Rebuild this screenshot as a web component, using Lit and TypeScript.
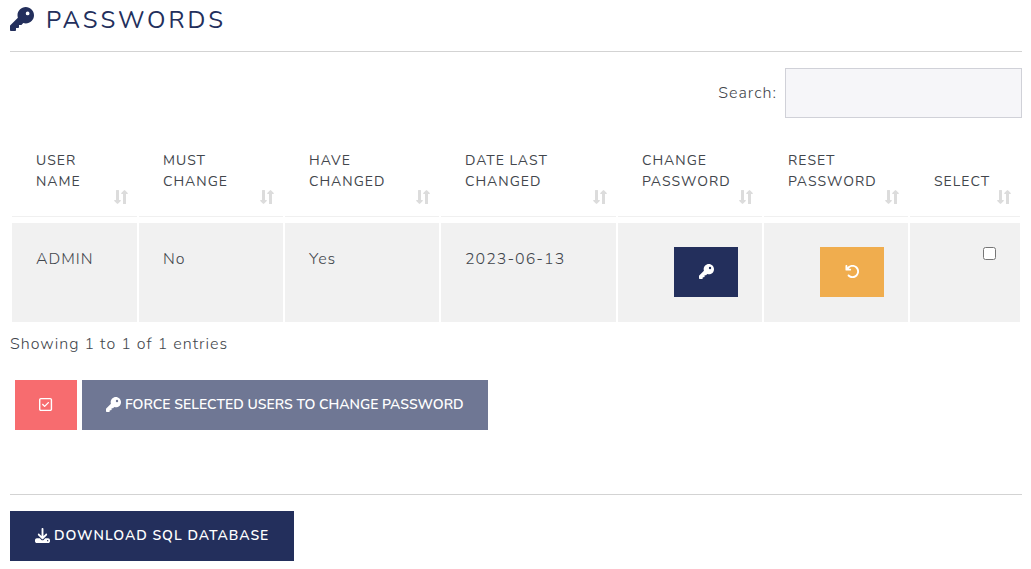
import { LitElement, html, svg, css } from "lit";
import { customElement, property, state } from "lit/decorators.js";

const glyphs: Record<string, { width: number; path: string }> = {
  key: {
    width: 512,
    path: "M336 352c97.2 0 176-78.8 176-176S433.2 0 336 0S160 78.8 160 176c0 18.7 2.9 36.8 8.3 53.7L7 391c-4.5 4.5-7 10.6-7 17v80c0 13.3 10.7 24 24 24h80c13.3 0 24-10.7 24-24V448h40c13.3 0 24-10.7 24-24V384h40c6.4 0 12.5-2.5 17-7l33.3-33.3c16.9 5.4 35 8.3 53.7 8.3zM376 96a40 40 0 1 1 0 80 40 40 0 1 1 0-80z",
  },
  undo: {
    width: 512,
    path: "M125.7 160H176c17.7 0 32 14.3 32 32s-14.3 32-32 32H48c-17.7 0-32-14.3-32-32V64c0-17.7 14.3-32 32-32s32 14.3 32 32v51.2L97.6 97.6c87.5-87.5 229.3-87.5 316.8 0s87.5 229.3 0 316.8s-229.3 87.5-316.8 0c-12.5-12.5-12.5-32.8 0-45.3s32.8-12.5 45.3 0c62.5 62.5 163.8 62.5 226.3 0s62.5-163.8 0-226.3s-163.8-62.5-226.3 0L125.7 160z",
  },
  check: {
    width: 448,
    path: "M64 80c-8.8 0-16 7.2-16 16V416c0 8.8 7.2 16 16 16H384c8.8 0 16-7.2 16-16V96c0-8.8-7.2-16-16-16H64zM0 96C0 60.7 28.7 32 64 32H384c35.3 0 64 28.7 64 64V416c0 35.3-28.7 64-64 64H64c-35.3 0-64-28.7-64-64V96zM337 209L209 337c-9.4 9.4-24.6 9.4-33.9 0l-64-64c-9.4-9.4-9.4-24.6 0-33.9s24.6-9.4 33.9 0l47 47L303 175c9.4-9.4 24.6-9.4 33.9 0s9.4 24.6 0 33.9z",
  },
  download: {
    width: 512,
    path: "M288 32c0-17.7-14.3-32-32-32s-32 14.3-32 32V274.7l-73.4-73.4c-12.5-12.5-32.8-12.5-45.3 0s-12.5 32.8 0 45.3l128 128c12.5 12.5 32.8 12.5 45.3 0l128-128c12.5-12.5 12.5-32.8 0-45.3s-32.8-12.5-45.3 0L288 274.7V32zM64 352c-35.3 0-64 28.7-64 64v32c0 35.3 28.7 64 64 64H448c35.3 0 64-28.7 64-64V416c0-35.3-28.7-64-64-64H346.5l-45.3 45.3c-25 25-65.5 25-90.5 0L165.5 352H64zm368 56a24 24 0 1 1 0 48 24 24 0 1 1 0-48z",
  },
};

@customElement("ui-icon")
class UiIcon extends LitElement {
  @property() name = "key";

  static styles = css`
    :host {
      display: inline-flex;
      flex: none;
      height: var(--icon-size, 15px);
      margin-bottom: 2px;
    }
    .glyph {
      display: block;
      height: var(--icon-size, 15px);
      fill: currentColor;
    }
  `;

  render() {
    const g = glyphs[this.name];
    return html`<svg class="glyph" viewBox="0 0 ${g.width} 512" aria-hidden="true">
      ${svg`<path d=${g.path}></path>`}
    </svg>`;
  }
}

interface User {
  name: string;
  mustChange: boolean;
  haveChanged: boolean;
  lastChanged: string;
}

const columns = [
  { label: "User Name", cls: "c-user" },
  { label: "Must Change", cls: "c-action" },
  { label: "Have Changed", cls: "c-have" },
  { label: "Date Last Changed", cls: "c-date" },
  { label: "Change Password", cls: "c-action" },
  { label: "Reset Password", cls: "c-action" },
  { label: "Select", cls: "c-select" },
];

@customElement("app-root")
class AppRoot extends LitElement {
  @state() private users: User[] = [
    { name: "ADMIN", mustChange: false, haveChanged: true, lastChanged: "2023-06-13" },
  ];

  static styles = css`
    :host {
      display: block;
      padding: 0 9px 8px 10px;
      background: #fff;
      color: #42464c;
      font: 300 16px/24px "Nunito", "Open Sans", sans-serif;
      letter-spacing: 1px;
    }
    .title {
      --icon-size: 24px;
      display: flex;
      align-items: center;
      gap: 12px;
      margin: 0;
      padding: 5px 0 16px;
      border-bottom: 1px solid #d3d3d3;
      color: #232f5c;
      font-size: 24px;
      font-weight: 400;
      line-height: 30px;
      letter-spacing: 3px;
      text-transform: uppercase;
    }
    .search {
      display: flex;
      justify-content: flex-end;
      align-items: center;
      gap: 8px;
      padding: 16px 0 2px;
    }
    .search-box {
      box-sizing: border-box;
      width: 237px;
      height: 50px;
      margin: 0;
      padding: 0 16px;
      border: 1px solid #d0d1d8;
      border-radius: 0;
      background: #f6f6f9;
      color: inherit;
      font: inherit;
    }
    .users {
      width: 100%;
      table-layout: fixed;
      border-collapse: separate;
      border-spacing: 2px 6px;
    }
    .c-user { width: 125px; }
    .c-action { width: 144px; }
    .c-have { width: 154px; }
    .c-date { width: 175px; }
    .c-select { width: 110px; }
    .head {
      position: relative;
      padding: 24px;
      border-bottom: 1px solid #f0f0f0;
      font-size: 14px;
      font-weight: 400;
      line-height: 21px;
      text-align: left;
      text-transform: uppercase;
      vertical-align: bottom;
    }
    .sort {
      position: absolute;
      right: 9px;
      bottom: 12px;
      width: 14px;
      height: 14px;
      fill: #dcdcdc;
    }
    .cell {
      padding: 24px 24px 25px;
      background: #f1f1f1;
      vertical-align: top;
    }
    .end {
      text-align: right;
    }
    .end > * {
      margin: 0 0 0 auto;
    }
    .tick {
      display: block;
      width: 13px;
      height: 13px;
    }
    .info {
      margin: 0;
      padding: 4px 0 24px;
    }
    .actions {
      display: flex;
      gap: 5px;
      padding: 0 5px 64px;
      border-bottom: 1px solid #d3d3d3;
    }
    .footer {
      display: flex;
      padding-top: 16px;
    }
    .btn {
      display: flex;
      align-items: center;
      justify-content: center;
      gap: 4px;
      height: 50px;
      padding: 0 24px;
      border: 0;
      border-radius: 0;
      background: #232f5c;
      color: #fff;
      font: 600 14px/20px "Nunito", "Open Sans", sans-serif;
      letter-spacing: inherit;
      text-decoration: none;
      text-transform: uppercase;
      cursor: pointer;
    }
    .square { width: 64px; }
    .reset { background: #f0ad4e; }
    .all {
      width: 62px;
      background: #f76c6f;
    }
    .force {
      letter-spacing: normal;
    }
    .force:disabled {
      opacity: 0.65;
      cursor: default;
    }
    .download {
      padding: 0 25px;
    }
  `;

  private sortIcon() {
    return html`<svg class="sort" viewBox="0 0 14 14" aria-hidden="true">
      <path d="M2 0.5Q2 0 2.5 0H4.5Q5 0 5 0.5V10H6.3Q7.2 10.2 6.7 11L4.2 13.6Q3.5 14.3 2.8 13.6L0.3 11Q-0.2 10.2 0.7 10H2Z"></path>
      <path d="M9 13.5Q9 14 9.5 14H11.5Q12 14 12 13.5V4H13.3Q14.2 3.8 13.7 3L11.2 0.4Q10.5 -0.3 9.8 0.4L7.3 3Q6.8 3.8 7.7 4H9Z"></path>
    </svg>`;
  }

  render() {
    return html`
      <h1 class="title"><ui-icon name="key"></ui-icon>Passwords</h1>
      <div class="search">
        <label for="search">Search:</label>
        <input class="search-box" id="search" type="search" />
      </div>
      <table class="users">
        <colgroup>
          ${columns.map((c) => html`<col class=${c.cls} />`)}
        </colgroup>
        <thead>
          <tr>
            ${columns.map((c) => html`<th class="head" scope="col">${c.label}${this.sortIcon()}</th>`)}
          </tr>
        </thead>
        <tbody>
          ${this.users.map(
            (u) => html`<tr>
              <td class="cell">${u.name}</td>
              <td class="cell">${u.mustChange ? "Yes" : "No"}</td>
              <td class="cell">${u.haveChanged ? "Yes" : "No"}</td>
              <td class="cell">${u.lastChanged}</td>
              <td class="cell end">
                <button class="btn square" aria-label="Change password"><ui-icon name="key"></ui-icon></button>
              </td>
              <td class="cell end">
                <button class="btn square reset" aria-label="Reset password"><ui-icon name="undo"></ui-icon></button>
              </td>
              <td class="cell end"><input class="tick" type="checkbox" aria-label="Select user" /></td>
            </tr>`
          )}
        </tbody>
      </table>
      <p class="info">Showing 1 to ${this.users.length} of ${this.users.length} entries</p>
      <div class="actions">
        <button class="btn all" aria-label="Select all"><ui-icon name="check"></ui-icon></button>
        <button class="btn force" disabled><ui-icon name="key"></ui-icon>Force selected users to change password</button>
      </div>
      <div class="footer">
        <a class="btn download" href="#download"><ui-icon name="download"></ui-icon>Download SQL Database</a>
      </div>
    `;
  }
}
